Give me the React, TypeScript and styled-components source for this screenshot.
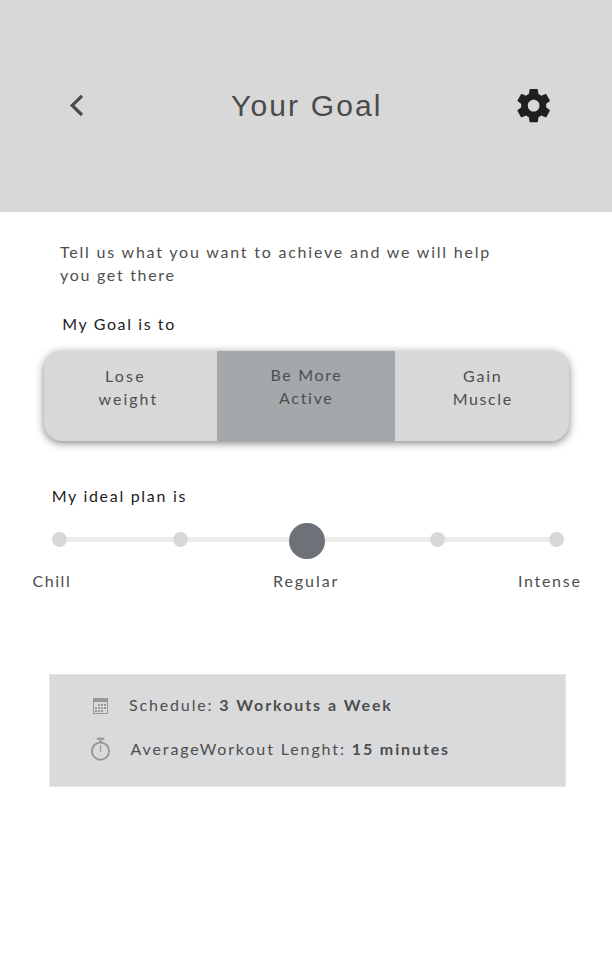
import React from "react";
import styled, { createGlobalStyle } from "styled-components";

const GlobalStyle = createGlobalStyle`
  * { box-sizing: border-box; }
  body {
    margin: 0;
    background: #ffffff;
    color: #4e4e4e;
    font-family: Lato, "Open Sans", sans-serif;
    font-size: 16px;
    line-height: 23px;
  }
  button { font: inherit; color: inherit; border: 0; padding: 0; background: none; }
  svg { display: block; }
`;

const Screen = styled.main`
  width: 612px;
  height: 966px;
  overflow: hidden;
`;

const Header = styled.header`
  display: grid;
  grid-template-columns: 174px 1fr 159px;
  align-items: center;
  height: 211.5px;
  padding: 0 58.5px 0 57px;
  background: #d8d8d8;
`;

const Title = styled.h1`
  margin: 0;
  color: #4a4a4a;
  font: 400 30px/36px "Liberation Sans", Arial, sans-serif;
  letter-spacing: 2.15px;
  white-space: nowrap;
`;

const IconButton = styled.button<{ $align: "start" | "end" }>`
  display: grid;
  width: 40px;
  height: 40px;
  place-items: center;
  justify-self: ${(p) => p.$align};
`;

const Line = styled.span<{ $spacing: number; $indent?: number }>`
  display: block;
  letter-spacing: ${(p) => p.$spacing}px;
  padding-left: ${(p) => p.$indent ?? 0}px;
  white-space: nowrap;
`;

const Intro = styled.p`
  margin: 28.5px 0 0 60px;
`;

const Label = styled.h2<{ $top: number; $left: number; $spacing: number }>`
  margin: ${(p) => p.$top}px 0 0 ${(p) => p.$left}px;
  font-size: 16px;
  font-weight: 400;
  letter-spacing: ${(p) => p.$spacing}px;
  color: #222222;
`;

const Segments = styled.div`
  display: grid;
  grid-template-columns: 173.5px 178px 174px;
  width: 525.5px;
  height: 90.5px;
  margin: 15.5px 0 0 43.5px;
  border-radius: 18px;
  background: #d8d8d8;
  box-shadow: 0 2px 9px rgba(0, 0, 0, 0.5);
`;

const Segment = styled.button<{ $active?: boolean; $left: number }>`
  display: flex;
  flex-direction: column;
  align-items: flex-start;
  margin-top: ${(p) => (p.$active ? 0.5 : 0)}px;
  padding: ${(p) => (p.$active ? 12 : 13.5)}px 0 0 ${(p) => p.$left}px;
  background: ${(p) => (p.$active ? "#a4a8ab" : "transparent")};
`;

const Slider = styled.div`
  display: flex;
  align-items: center;
  height: 37px;
  margin: 15.2px 0 0 52px;
`;

const Stop = styled.span`
  flex: none;
  width: 15px;
  height: 15px;
  margin-bottom: 2px;
  border-radius: 50%;
  background: #d8d8d8;
`;

const Thumb = styled.span`
  flex: none;
  width: 36px;
  height: 36px;
  border-radius: 50%;
  background: #6d7278;
`;

const Track = styled.span<{ $width: number }>`
  flex: none;
  width: ${(p) => p.$width}px;
  height: 5px;
  margin-bottom: 2.6px;
  background: #ececec;
`;

const Scale = styled.div`
  display: grid;
  grid-template-columns: 240.5px 245px auto;
  margin: 9.8px 0 0 32.5px;
`;

const Summary = styled.section`
  display: flex;
  flex-direction: column;
  gap: 21px;
  width: 517px;
  height: 113px;
  margin: 82.5px 0 0 48.5px;
  padding: 17.5px 0 0 40px;
  border: 1px solid #e4e5e6;
  background: #d9dadc;
`;

const SummaryRow = styled.div`
  display: grid;
  grid-template-columns: 39.5px auto;
  grid-template-rows: 23px;
  align-items: center;
`;

const SummaryText = styled.p<{ $left?: number; $spacing: number }>`
  margin: 0 0 0 ${(p) => p.$left ?? 0}px;
  letter-spacing: ${(p) => p.$spacing}px;
  white-space: nowrap;
`;

const Value = styled.strong<{ $spacing: number }>`
  font-weight: 700;
  letter-spacing: ${(p) => p.$spacing}px;
`;

const BackIcon = () => (
  <svg width="40" height="40" viewBox="0 0 40 40" fill="none">
    <path d="M25 9.8 15.2 19.4 25 29" stroke="#4a4a4a" strokeWidth="3.2" />
  </svg>
);

const GearIcon = () => (
  <svg width="40" height="40" viewBox="0.2 0.2 24 24" fill="#1f1f1f">
    <path d="M19.43 12.98c.04-.32.07-.64.07-.98s-.03-.66-.07-.98l2.11-1.65c.19-.15.24-.42.12-.64l-2-3.46c-.12-.22-.39-.3-.61-.22l-2.49 1c-.52-.4-1.08-.73-1.69-.98l-.38-2.65C14.46 2.18 14.25 2 14 2h-4c-.25 0-.46.18-.49.42l-.38 2.65c-.61.25-1.17.59-1.69.98l-2.49-1c-.23-.09-.49 0-.61.22l-2 3.46c-.13.22-.07.49.12.64l2.11 1.65c-.04.32-.07.65-.07.98s.03.66.07.98l-2.11 1.65c-.19.15-.24.42-.12.64l2 3.46c.12.22.39.3.61.22l2.49-1c.52.4 1.08.73 1.69.98l.38 2.65c.03.24.24.42.49.42h4c.25 0 .46-.18.49-.42l.38-2.65c.61-.25 1.17-.59 1.69-.98l2.49 1c.23.09.49 0 .61-.22l2-3.46c.12-.22.07-.49-.12-.64l-2.11-1.65zM12 15.5c-1.93 0-3.5-1.57-3.5-3.5s1.57-3.5 3.5-3.5 3.5 1.57 3.5 3.5-1.57 3.5-3.5 3.5z" />
  </svg>
);

const days = [
  [8, 6], [11, 6], [5, 6],
  [2, 9], [5, 9], [8, 9], [11, 9],
  [2, 12], [5, 12], [8, 12],
];

const CalendarIcon = () => (
  <svg width="22" height="19" viewBox="-3 -3 22 19" fill="#979797">
    <path d="M0 0H2.5L3.2 .8 4 0H11L11.8 .8 12.5 0H15V4H0Z" />
    <path d="M.5 3V15.5H14.5V3" fill="none" stroke="#979797" />
    {days.map(([x, y]) => (
      <rect key={`${x}-${y}`} x={x} y={y} width="2" height="2" />
    ))}
  </svg>
);

const StopwatchIcon = () => (
  <svg width="22" height="28" viewBox="0 -3.5 22 28" fill="none" stroke="#979797">
    <circle cx="10.5" cy="13.6" r="8.6" strokeWidth="1.9" />
    <path d="M6.8 1.2H14.2" strokeWidth="2.2" />
    <path d="M10.5 2V5.5" strokeWidth="2.2" />
    <path d="M10.5 7.8V14.5" strokeWidth="1.2" />
  </svg>
);

export default function App() {
  return (
    <Screen>
      <GlobalStyle />
      <Header>
        <IconButton $align="start" aria-label="Back"><BackIcon /></IconButton>
        <Title>Your Goal</Title>
        <IconButton $align="end" aria-label="Settings"><GearIcon /></IconButton>
      </Header>

      <Intro>
        <Line $spacing={1.79}>Tell us what you want to achieve and we will help</Line>
        <Line $spacing={1.7}>you get there</Line>
      </Intro>

      <Label $top={26} $left={62.3} $spacing={1.6}>My Goal is to</Label>
      <Segments>
        <Segment $left={55}>
          <Line $spacing={2.2} $indent={6.5}>Lose</Line>
          <Line $spacing={2}>weight</Line>
        </Segment>
        <Segment $active $left={53.5}>
          <Line $spacing={1.65}>Be More</Line>
          <Line $spacing={1.7} $indent={8.5}>Active</Line>
        </Segment>
        <Segment $left={57.7}>
          <Line $spacing={1.8} $indent={10.3}>Gain</Line>
          <Line $spacing={1.6}>Muscle</Line>
        </Segment>
      </Segments>

      <Label $top={43} $left={51.7} $spacing={1.7}>My ideal plan is</Label>
      <Slider>
        <Stop />
        <Track $width={106} />
        <Stop />
        <Track $width={101} />
        <Thumb />
        <Track $width={104.5} />
        <Stop />
        <Track $width={104.5} />
        <Stop />
      </Slider>
      <Scale>
        <Line $spacing={1.55}>Chill</Line>
        <Line $spacing={1.95}>Regular</Line>
        <Line $spacing={1.7}>Intense</Line>
      </Scale>

      <Summary>
        <SummaryRow>
          <CalendarIcon />
          <SummaryText $spacing={1.85}>
            Schedule: <Value $spacing={1.93}>3 Workouts a Week</Value>
          </SummaryText>
        </SummaryRow>
        <SummaryRow>
          <StopwatchIcon />
          <SummaryText $left={1.5} $spacing={1.88}>
            AverageWorkout Lenght: <Value $spacing={1.88}>15 minutes</Value>
          </SummaryText>
        </SummaryRow>
      </Summary>
    </Screen>
  );
}
